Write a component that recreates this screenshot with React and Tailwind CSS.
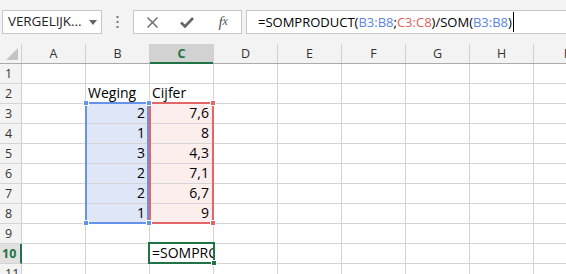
import React from "react";

const COLS = ["A", "B", "C", "D", "E", "F", "G", "H", "I"];
const ROWS = [1, 2, 3, 4, 5, 6, 7, 8, 9, 10, 11];

const DATA = {
  "B2": { v: "Weging", a: "left" },
  "C2": { v: "Cijfer", a: "left" },
  "B3": { v: "2" }, "C3": { v: "7,6" },
  "B4": { v: "1" }, "C4": { v: "8" },
  "B5": { v: "3" }, "C5": { v: "4,3" },
  "B6": { v: "2" }, "C6": { v: "7,1" },
  "B7": { v: "2" }, "C7": { v: "6,7" },
  "B8": { v: "1" }, "C8": { v: "9" },
  "C10": { v: "=SOMPRO", a: "left" },
};

function cellBg(c, r) {
  if (c === "B" && r >= 3 && r <= 8) return "bg-[#dfe6f8]";
  if (c === "C" && r >= 3 && r <= 8) return "bg-[#fdeeee]";
  return "bg-white";
}

function TopBar() {
  return (
    <div className="h-[44px] bg-[#f3f3f3] flex items-start pt-[10px] pl-[2px] gap-0">
      <div className="w-[100px] h-[24px] bg-white border border-[#c6c6c6] flex items-center pl-[5px] pr-[4px] text-[13.5px] text-[#262626]">
        <span className="flex-1 leading-none tracking-[-0.1px]">VERGELIJK...</span>
        <svg width="8" height="5" viewBox="0 0 8 5"><path d="M0 0H8L4 5Z" fill="#666" /></svg>
      </div>
      <div className="w-[31px] h-[24px] flex items-center justify-center">
        <svg width="3" height="12" viewBox="0 0 3 12">
          <rect x="0.5" y="0" width="2" height="2" fill="#777" />
          <rect x="0.5" y="5" width="2" height="2" fill="#777" />
          <rect x="0.5" y="10" width="2" height="2" fill="#777" />
        </svg>
      </div>
      <div className="w-[109px] h-[24px] bg-white border border-[#c6c6c6] flex items-center">
        <div className="w-[38px] flex justify-center">
          <svg width="11" height="11" viewBox="0 0 11 11"><path d="M0.5 0.5L10.5 10.5M10.5 0.5L0.5 10.5" stroke="#666" strokeWidth="1.4" /></svg>
        </div>
        <div className="w-[32px] flex justify-center">
          <svg width="14" height="11" viewBox="0 0 14 11"><path d="M1 5.5L5 9.5L13 1" stroke="#666" strokeWidth="2.6" fill="none" /></svg>
        </div>
        <div className="w-[38px] flex justify-center pl-[2px] text-[#555] italic text-[15px] leading-none" style={{ fontFamily: '"Liberation Serif", serif' }}>
          f<span className="text-[12px]">x</span>
        </div>
      </div>
      <div className="ml-[4px] flex-1 h-[24px] bg-white border border-[#c6c6c6] border-r-0 flex items-center pl-[11px] text-[13px] text-black">
        <span className="leading-none">
          =SOMPRODUCT(<span className="text-[#5a86e2]">B3:B8</span>;<span className="text-[#e05e5e]">C3:C8</span>)/SOM(<span className="text-[#5a86e2]">B3:B8</span>)
        </span>
        <span className="ml-[1px] w-[1px] h-[20px] bg-black" />
      </div>
    </div>
  );
}

function HeaderRow() {
  return (
    <div className="flex w-[600px] h-[20px] bg-[#f3f3f3] border-b border-[#ababab]">
      <div className="w-[22px] shrink-0 h-full border-r border-[#d0d0d0] flex items-end justify-end pr-[3px] pb-[3px]">
        <svg width="12" height="12" viewBox="0 0 12 12"><path d="M12 0V12H0Z" fill="#c4c4c4" /></svg>
      </div>
      {COLS.map((c) => {
        const sel = c === "C";
        return (
          <div
            key={c}
            className={
              "w-[64px] shrink-0 border-r border-[#d0d0d0] " +
              (sel ? "bg-[#d2d2d2] text-[#217346] font-bold relative " : "text-[#333] ") +
              "h-full flex items-center justify-center text-[12.5px] leading-[19px]"
            }
          >
            {c}
            {sel && <div className="absolute left-0 right-0 bottom-[-1px] h-[2px] bg-[#217346]" />}
          </div>
        );
      })}
    </div>
  );
}

function Row({ r }) {
  const active = r === 10;
  return (
    <div className="flex w-[600px] h-[20px]">
      <div
        className={
          "w-[22px] shrink-0 h-full border-b border-[#d4d4d4] flex items-center text-[12.5px] leading-[19px] relative " +
          (active ? "bg-[#e1e1e1] text-[#217346] font-bold pl-[2px] border-r-2 border-r-[#217346]" : "bg-[#f3f3f3] text-[#333] pl-[5px] border-r border-r-[#d0d0d0]")
        }
      >
        {r}
      </div>
      {COLS.map((c) => {
        const d = DATA[c + r];
        return (
          <div
            key={c}
            className={
              "w-[64px] shrink-0 border-r h-full border-b border-[#d4d4d4] overflow-hidden whitespace-nowrap flex items-end pb-[1px] text-[14px] leading-[19px] text-black " +
              cellBg(c, r) +
              (d && d.a === "left" ? " justify-start pl-[2px]" : " justify-end pr-[4px]")
            }
          >
            {d ? d.v : ""}
          </div>
        );
      })}
    </div>
  );
}

function Handle({ x, y, color }) {
  return (
    <div
      className="absolute w-[6px] h-[6px] border border-white"
      style={{ left: x - 3, top: y - 3, backgroundColor: color }}
    />
  );
}

export default function App() {
  return (
    <div
      className="relative w-[566px] h-[274px] overflow-hidden bg-white"
      style={{ fontFamily: '"Open Sans", "Noto Sans", sans-serif' }}
    >
      <TopBar />
      <HeaderRow />
      {ROWS.map((r) => (
        <Row key={r} r={r} />
      ))}

      {/* C3:C8 range */}
      <div className="absolute left-[149px] top-[102px] w-[65px] h-[122px] border-2 border-[#e26666]" />
      {/* B3:B8 range */}
      <div className="absolute left-[85px] top-[102px] w-[64px] h-[122px] border-2 border-[#6592ea]" />
      <Handle x={86} y={103} color="#6592ea" />
      <Handle x={149} y={103} color="#6592ea" />
      <Handle x={86} y={223} color="#6592ea" />
      <Handle x={149} y={223} color="#6592ea" />
      <Handle x={213} y={103} color="#e26666" />
      <Handle x={213} y={223} color="#e26666" />

      {/* active cell C10 */}
      <div className="absolute left-[148px] top-[242px] w-[67px] h-[22px] border-2 border-[#217346]" />
      <div className="absolute left-[211px] top-[260px] w-[6px] h-[6px] bg-[#217346] border border-white" />
    </div>
  );
}
